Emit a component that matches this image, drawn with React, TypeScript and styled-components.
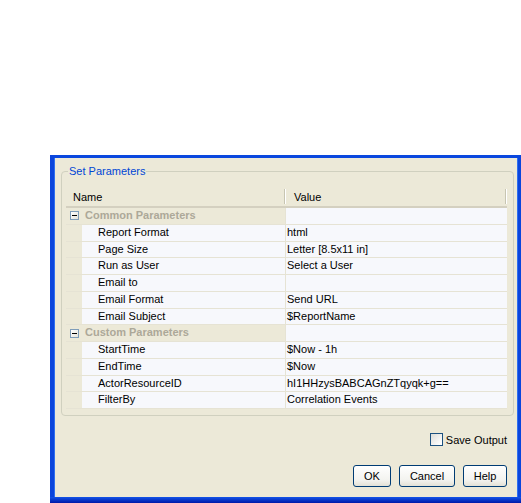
import React from "react";
import styled, { createGlobalStyle } from "styled-components";

type Param = { name: string; value: string };
type Group = { title: string; params: Param[] };

const groups: Group[] = [
  {
    title: "Common Parameters",
    params: [
      { name: "Report Format", value: "html" },
      { name: "Page Size", value: "Letter [8.5x11 in]" },
      { name: "Run as User", value: "Select a User" },
      { name: "Email to", value: "" },
      { name: "Email Format", value: "Send URL" },
      { name: "Email Subject", value: "$ReportName" },
    ],
  },
  {
    title: "Custom Parameters",
    params: [
      { name: "StartTime", value: "$Now - 1h" },
      { name: "EndTime", value: "$Now" },
      { name: "ActorResourceID", value: "hI1HHzysBABCAGnZTqyqk+g==" },
      { name: "FilterBy", value: "Correlation Events" },
    ],
  },
];

const GlobalStyle = createGlobalStyle`
  html, body {
    margin: 0;
    padding: 0;
    background: #ffffff;
  }
  body {
    font-family: "Liberation Sans", Arial, sans-serif;
    font-size: 11px;
    color: #000;
  }
`;

const Page = styled.div`
  padding: 155px 0 0 50px;
  width: 521px;
  height: 503px;
  box-sizing: border-box;
  overflow: hidden;
`;

const Window = styled.div`
  width: 471px;
  height: 348px;
  box-sizing: border-box;
  background: #ece9d8;
  border-top: 3px solid #0a47de;
  border-left: 4px solid #0b45dc;
  border-right: 3px solid #0b45dc;
  box-shadow: inset 1px 0 0 #2f6ff0, inset -1px 0 0 #2f6ff0;
  display: flex;
  flex-direction: column;
`;

const Body = styled.div`
  flex: 1;
  display: flex;
  flex-direction: column;
  padding: 7px 4px 0 7px;
`;

const Frame = styled.fieldset`
  margin: 0;
  padding: 9px 6px 6px 4px;
  border: 1px solid #d0d0bf;
  border-radius: 4px;
  min-width: 0;
`;

const Legend = styled.legend`
  margin-left: 2px;
  padding: 0 1px;
  line-height: 13px;
  color: #0046d5;
`;

const Table = styled.div`
  background: #ece9d8;
`;

const Header = styled.div`
  display: flex;
  align-items: center;
  height: 19px;
  border-bottom: 2px solid #d4d0c0;
`;

const HeadCell = styled.div<{ $width?: number; $pad: number }>`
  ${(p) => (p.$width ? `width: ${p.$width}px;` : "flex: 1;")}
  padding-left: ${(p) => p.$pad}px;
  box-sizing: border-box;
`;

const HeadDivider = styled.div`
  width: 1px;
  height: 15px;
  background: #c7c5b2;
  box-shadow: 1px 0 0 #ffffff;
  margin-right: 1px;
`;

const Row = styled.div`
  display: flex;
  height: 15.75px;
  border-bottom: 1px solid #e6e3d4;
  line-height: 15.75px;
`;

const GroupName = styled.div`
  width: 219px;
  display: flex;
  align-items: center;
  padding-left: 4px;
  box-sizing: border-box;
  font-weight: bold;
  color: #aca899;
  gap: 6px;
`;

const Toggle = styled.span`
  width: 9px;
  height: 9px;
  box-sizing: border-box;
  border: 1px solid #7f9db9;
  background: linear-gradient(135deg, #ffffff 0%, #e4e3da 100%);
  display: flex;
  align-items: center;
  justify-content: center;
  &::before {
    content: "";
    width: 5px;
    height: 1px;
    background: #000;
  }
`;

const Indent = styled.div`
  width: 16px;
`;

const NameCell = styled.div`
  width: 203px;
  background: #f7f8fc;
  padding-left: 16px;
  box-sizing: border-box;
  white-space: nowrap;
`;

const ValueCell = styled.div`
  flex: 1;
  background: #f7f8fc;
  border-left: 1px solid #e6e3d4;
  padding-left: 1px;
  white-space: nowrap;
  overflow: hidden;
`;

const CheckRow = styled.label`
  display: flex;
  align-items: center;
  justify-content: flex-end;
  gap: 3px;
  margin: 17px 7px 0 0;
  height: 13px;
`;

const CheckBox = styled.span`
  width: 13px;
  height: 13px;
  box-sizing: border-box;
  border: 1px solid #1c5180;
  background: linear-gradient(135deg, #dcdcd7 0%, #ffffff 90%);
`;

const Buttons = styled.div`
  display: flex;
  justify-content: flex-end;
  gap: 8px;
  margin: 19px 7px 0 0;
`;

const Button = styled.button<{ $width: number }>`
  width: ${(p) => p.$width}px;
  height: 22px;
  box-sizing: border-box;
  border: 1px solid #003c74;
  border-radius: 3px;
  background: linear-gradient(180deg, #ffffff 0%, #f3f3ef 70%, #e3e1d6 100%);
  font-family: inherit;
  font-size: 11px;
  color: #000;
  padding: 0;
`;

const BottomEdge = styled.div`
  height: 6px;
  margin: 0 -3px 0 -4px;
  background: linear-gradient(180deg, #1454e8 0%, #0a3ccf 40%, #0019a8 100%);
`;

export default function App() {
  return (
    <>
      <GlobalStyle />
      <Page>
        <Window>
          <Body>
            <Frame>
              <Legend>Set Parameters</Legend>
              <Table>
                <Header>
                  <HeadCell $width={218} $pad={7}>
                    Name
                  </HeadCell>
                  <HeadDivider />
                  <HeadCell $pad={8}>Value</HeadCell>
                  <HeadDivider />
                </Header>
                {groups.map((g) => (
                  <React.Fragment key={g.title}>
                    <Row>
                      <GroupName>
                        <Toggle />
                        {g.title}
                      </GroupName>
                      <ValueCell />
                    </Row>
                    {g.params.map((p) => (
                      <Row key={p.name}>
                        <Indent />
                        <NameCell>{p.name}</NameCell>
                        <ValueCell>{p.value}</ValueCell>
                      </Row>
                    ))}
                  </React.Fragment>
                ))}
              </Table>
            </Frame>
            <CheckRow>
              <CheckBox />
              Save Output
            </CheckRow>
            <Buttons>
              <Button $width={38}>OK</Button>
              <Button $width={56}>Cancel</Button>
              <Button $width={44}>Help</Button>
            </Buttons>
          </Body>
          <BottomEdge />
        </Window>
      </Page>
    </>
  );
}
